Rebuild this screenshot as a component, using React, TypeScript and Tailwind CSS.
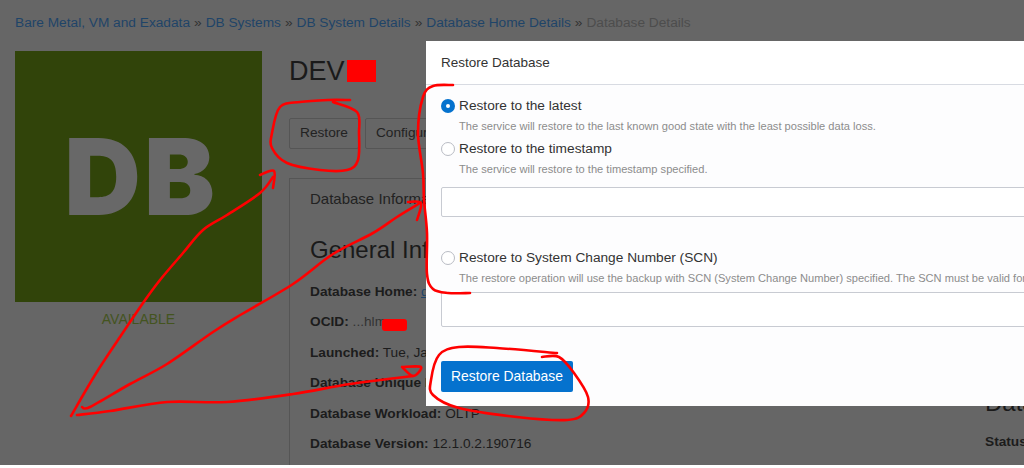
const font = "font-['Liberation_Sans',Arial,sans-serif]";

// catmull-rom through the hand drawn points
function smooth(pts: number[][]) {
  let d = `M${pts[0][0]} ${pts[0][1]}`;
  for (let i = 0; i < pts.length - 1; i++) {
    const p0 = pts[i - 1] || pts[i];
    const p1 = pts[i];
    const p2 = pts[i + 1];
    const p3 = pts[i + 2] || p2;
    const c1x = p1[0] + (p2[0] - p0[0]) / 6;
    const c1y = p1[1] + (p2[1] - p0[1]) / 6;
    const c2x = p2[0] - (p3[0] - p1[0]) / 6;
    const c2y = p2[1] - (p3[1] - p1[1]) / 6;
    d += ` C${c1x} ${c1y} ${c2x} ${c2y} ${p2[0]} ${p2[1]}`;
  }
  return d;
}

const strokes = [
  // circle round Restore
  [[350, 100], [328, 100], [300, 102], [280, 107], [272, 133], [272, 148], [287, 163], [320, 170], [347, 170], [358, 160], [359, 133], [357, 112], [333, 102]],
  // arrow 1
  [[71, 416], [95, 375], [120, 337], [143, 303], [160, 280], [183, 253], [203, 230], [227, 215], [260, 193], [273, 177]],
  [[260, 175], [274, 171], [273, 188]],
  // arrow 2
  [[82, 407], [90, 407], [130, 384], [167, 364], [213, 332], [242, 314], [293, 284], [333, 254], [373, 233], [397, 217], [420, 203]],
  [[408, 202], [421, 203], [417, 220]],
  // arrow 3
  [[77, 415], [110, 411], [167, 402], [227, 402], [293, 394], [350, 384], [413, 376]],
  [[402, 367], [421, 367], [413, 376], [402, 367]],
  // bracket round the radios
  [[453, 85], [433, 86], [423, 97], [418, 133], [423, 173], [424, 200], [427, 233], [427, 274], [433, 289], [448, 293], [470, 293]],
  // circle round the button
  [[557, 353], [497, 348], [459, 347], [439, 355], [431, 380], [433, 395], [459, 408], [517, 417], [567, 420], [584, 413], [588, 397], [574, 373], [559, 357], [542, 357]],
];

function Row({ label, children }: { label: string; children?: React.ReactNode }) {
  return (
    <p className="h-[30.4px] text-[13.7px] leading-5 text-[#1c1c1c] whitespace-nowrap">
      <b>{label}</b> {children}
    </p>
  );
}

function Option({ label, hint, checked }: { label: string; hint: string; checked?: boolean }) {
  return (
    <div>
      <div className="flex items-center gap-1 h-5">
        {checked ? (
          <span className="w-[14px] h-[14px] rounded-full bg-[#0572ce] flex items-center justify-center">
            <span className="w-1 h-1 rounded-full bg-white" />
          </span>
        ) : (
          <span className="w-[14px] h-[14px] rounded-full border border-[#b9bcc4] bg-white" />
        )}
        <span className="text-[13.7px] text-[#333]">{label}</span>
      </div>
      <p className="pl-[18px] mt-[2px] text-[11.1px] leading-[16px] text-[#8c8c8c] whitespace-nowrap">{hint}</p>
    </div>
  );
}

export default function App() {
  return (
    <div className={`${font} relative w-[1024px] h-[468px] overflow-hidden bg-white`}>
      <div className="h-[465px] overflow-hidden bg-[#666666] px-[15px] pt-[14px]">
        <nav className="flex gap-[4px] h-[17px] text-[13.7px] leading-[17px] text-[#1f4468] whitespace-nowrap">
          <span>Bare Metal, VM and Exadata</span>
          <span className="text-[#333]">»</span>
          <span>DB Systems</span>
          <span className="text-[#333]">»</span>
          <span>DB System Details</span>
          <span className="text-[#333]">»</span>
          <span>Database Home Details</span>
          <span className="text-[#333]">»</span>
          <span className="text-[#4d4d4d]">Database Details</span>
        </nav>
        <div className="flex mt-[20px]">
          <div className="w-[247px] shrink-0">
            <div className="h-[251px] bg-[#31440a] flex items-center justify-center pl-[5px]">
              <span className="text-[106px] tracking-[3px] font-black leading-none text-[#686868] font-['Inter',sans-serif]">DB</span>
            </div>
            <p className="mt-[8px] text-center text-[14px] leading-[18px] text-[#44541f]">AVAILABLE</p>
          </div>
          <div className="ml-[27px] flex-1">
            <h1 className="h-[40px] text-[27px] leading-[40px] text-[#1a1a1a]">DEV</h1>
            <div className="flex gap-[6px] mt-[27px]">
              <button className="h-[31px] px-[10px] border border-[#555] rounded-[2px] text-[13.7px] text-[#222]">Restore</button>
              <button className="h-[31px] px-[10px] border border-[#555] rounded-[2px] text-[13.7px] text-[#222]">Configure</button>
            </div>
            <div className="mt-[29px] h-[300px] border-l border-t border-[#555] pl-[20px] pt-[11px]">
              <p className="text-[15px] leading-[18px] text-[#222]">Database Information</p>
              <div className="flex">
                <div className="w-[675px]">
                  <h2 className="mt-[27px] text-[24px] leading-[30px] text-[#1a1a1a]">General Information</h2>
                  <div className="mt-[17px]">
                    <Row label="Database Home:"><span className="text-[#1f4468] underline">db</span></Row>
                    <Row label="OCID:"><span className="text-[#333]">...hlm</span></Row>
                    <Row label="Launched:">Tue, Jan</Row>
                    <Row label="Database Unique Name:" />
                    <Row label="Database Workload:">OLTP</Row>
                    <Row label="Database Version:">12.1.0.2.190716</Row>
                  </div>
                </div>
                <div>
                  <h2 className="mt-[180px] text-[24px] leading-[30px] text-[#1a1a1a]">Data</h2>
                  <p className="mt-[14px] text-[13.7px] leading-5 font-bold text-[#1c1c1c]">Status:</p>
                </div>
              </div>
            </div>
          </div>
        </div>
      </div>

      {/* modal */}
      <div className="absolute left-[426px] top-[41px] w-[640px] h-[365px] bg-[#fdfdfe]">
        <div className="h-[44px] border-b border-[#d8dbe2] pl-[15px] flex items-center bg-white">
          <span className="text-[13.5px] text-[#333] translate-y-[1px]">Restore Database</span>
        </div>
        <div className="pl-[15px] pt-[11px]">
          <Option checked label="Restore to the latest" hint="The service will restore to the last known good state with the least possible data loss." />
          <div className="mt-[5px]">
            <Option label="Restore to the timestamp" hint="The service will restore to the timestamp specified." />
          </div>
          <div className="mt-[10px] h-[30px] border border-[#c8cbd2] rounded-[2px] bg-white" />
          <div className="mt-[31px]">
            <Option label="Restore to System Change Number (SCN)" hint="The restore operation will use the backup with SCN (System Change Number) specified. The SCN must be valid for the selected backup." />
          </div>
          <div className="mt-[6px] h-[35px] border border-[#c8cbd2] rounded-[2px] bg-white" />
          <button className="mt-[34px] h-[31px] w-[132px] rounded-[2px] bg-[#0572ce] text-[13.9px] text-white">Restore Database</button>
        </div>
      </div>

      {/* red marker annotations */}
      <div className="absolute left-[347px] top-[60px] w-[29px] h-[22px] bg-[#ff0000]" />
      <div className="absolute left-[382px] top-[319px] w-[25px] h-[12px] rounded-[3px] bg-[#ff0000]" />
      <svg className="absolute left-0 top-0" width="1024" height="468" fill="none" stroke="#ff0000" strokeWidth="2.6" strokeLinecap="round" strokeLinejoin="round">
        {strokes.map((pts, i) => (
          <path key={i} d={smooth(pts)} />
        ))}
      </svg>
    </div>
  );
}
